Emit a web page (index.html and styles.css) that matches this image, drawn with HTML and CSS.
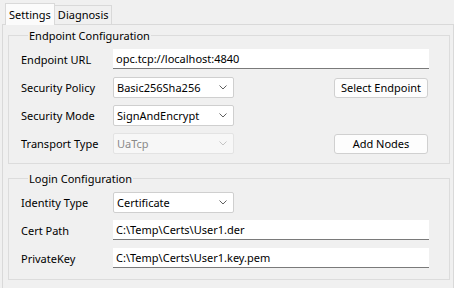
FILE: index.html
```html
<!DOCTYPE html>
<html>
<head>
<meta charset="utf-8">
<link rel="stylesheet" href="styles.css">
</head>
<body>
<div class="tabs">
  <div class="tab tab-active">Settings</div>
  <div class="tab">Diagnosis</div>
</div>
<div class="panel">
  <fieldset class="group group-endpoint">
    <legend class="legend">Endpoint Configuration</legend>
    <div class="form">
      <div class="label">Endpoint URL</div>
      <div class="input input-wide">opc.tcp://localhost:4840</div>

      <div class="label">Security Policy</div>
      <div class="combo"><span>Basic256Sha256</span><svg class="chev" width="8" height="5" viewBox="0 0 8 5"><path d="M0.5 0.5 L4 4 L7.5 0.5" fill="none" stroke="#606060" stroke-width="1"/></svg></div>
      <div class="spacer"></div>
      <div class="button">Select Endpoint</div>

      <div class="label">Security Mode</div>
      <div class="combo"><span>SignAndEncrypt</span><svg class="chev" width="8" height="5" viewBox="0 0 8 5"><path d="M0.5 0.5 L4 4 L7.5 0.5" fill="none" stroke="#606060" stroke-width="1"/></svg></div>
      <div class="spacer"></div>
      <div class="spacer"></div>

      <div class="label">Transport Type</div>
      <div class="combo combo-disabled"><span>UaTcp</span><svg class="chev" width="8" height="5" viewBox="0 0 8 5"><path d="M0.5 0.5 L4 4 L7.5 0.5" fill="none" stroke="#c4c4c4" stroke-width="1"/></svg></div>
      <div class="spacer"></div>
      <div class="button">Add Nodes</div>
    </div>
  </fieldset>
  <fieldset class="group group-login">
    <legend class="legend">Login Configuration</legend>
    <div class="form">
      <div class="label">Identity Type</div>
      <div class="combo"><span>Certificate</span><svg class="chev" width="8" height="5" viewBox="0 0 8 5"><path d="M0.5 0.5 L4 4 L7.5 0.5" fill="none" stroke="#606060" stroke-width="1"/></svg></div>
      <div class="spacer"></div>
      <div class="spacer"></div>

      <div class="label">Cert Path</div>
      <div class="input input-wide">C:\Temp\Certs\User1.der</div>

      <div class="label">PrivateKey</div>
      <div class="input input-wide">C:\Temp\Certs\User1.key.pem</div>
    </div>
  </fieldset>
</div>
</body>
</html>
```
FILE: styles.css
```css
* { box-sizing: border-box; }
html, body {
  margin: 0;
  padding: 0;
  width: 454px;
  height: 288px;
  overflow: hidden;
  background: #f0f0f0;
  font-family: "Noto Sans", "Liberation Sans", sans-serif;
  font-size: 11px;
  color: #000;
}
.tabs {
  display: flex;
  align-items: flex-end;
  height: 24px;
  padding-left: 5px;
  position: relative;
  z-index: 1;
}
.tab {
  height: 19px;
  padding: 0 2px 0 3px;
  border: 1px solid #d9d9d9;
  border-bottom: none;
  border-left: none;
  line-height: 18px;
  background: #f0f0f0;
}
.tab-active {
  height: 22px;
  border-left: 1px solid #d9d9d9;
  background: #fbfbfb;
  padding: 0 3px 0 3px;
  line-height: 22px;
  margin-bottom: -1px;
}
.panel {
  margin-left: 2px;
  border: 1px solid #d9d9d9;
  height: 270px;
  padding: 0 3px 0 5px;
}
.group {
  margin: 0;
  border: 1px solid #dcdcdc;
  padding: 0 20px 0 12px;
  min-width: 0;
}
.legend {
  padding: 0 1px;
  margin-left: 7px;
  line-height: 15px;
}
.group-endpoint {
  margin-top: 3px;
  height: 136px;
  padding-top: 6px;
}
.group-login {
  margin-top: 7px;
  height: 109px;
  padding-top: 6px;
}
.form {
  display: grid;
  grid-template-columns: 92px 121px 1fr 95px;
  grid-auto-rows: 21px;
  row-gap: 7px;
  align-items: center;
}
.label {
  white-space: nowrap;
}
.input {
  height: 20px;
  align-self: start;
  background: #fff;
  border-bottom: 1px solid #7a7a7a;
  padding: 0 3px;
  line-height: 19px;
  white-space: nowrap;
}
.input-wide { grid-column: 2 / 5; }
.combo {
  height: 21px;
  background: #fff;
  border: 1px solid #cfcfcf;
  border-radius: 2px;
  padding: 0 6px 0 3px;
  display: flex;
  align-items: center;
  justify-content: space-between;
  white-space: nowrap;
}
.combo-disabled {
  background: #f7f7f7;
  border-color: #e3e3e3;
  color: #8a8a8a;
}
.button {
  width: 94px;
  height: 20px;
  background: #fdfdfd;
  border: 1px solid #d0d0d0;
  border-radius: 3px;
  text-align: center;
  line-height: 18px;
  white-space: nowrap;
}
```
